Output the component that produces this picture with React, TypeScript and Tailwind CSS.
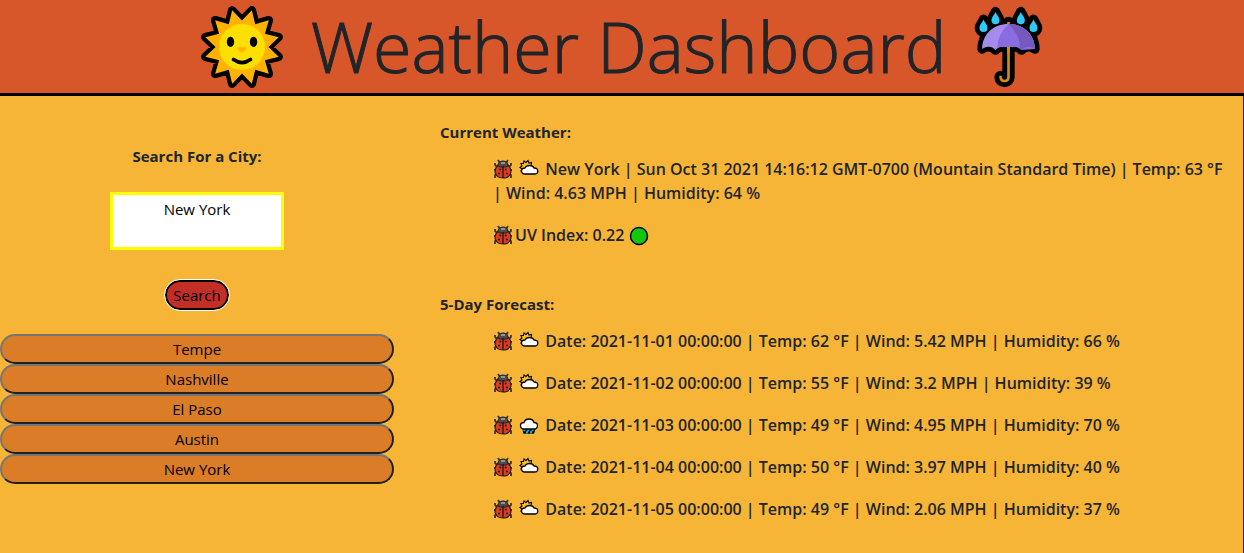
import React from "react";

function star(points: number, outer: number, inner: number) {
  return Array.from({ length: points * 2 }, (_, i) => {
    const angle = ((15 + (i * 180) / points) * Math.PI) / 180;
    const r = i % 2 === 0 ? outer : inner;
    return `${(Math.sin(angle) * r).toFixed(1)},${(-Math.cos(angle) * r).toFixed(1)}`;
  }).join(" ");
}

function SunIcon() {
  const points = star(12, 112, 78);
  return (
    <svg viewBox="-121 -121 242 242" className="size-[82px] shrink-0" aria-hidden="true">
      <polygon points={points} fill="#000" stroke="#000" strokeWidth="25" strokeLinejoin="round" />
      <polygon points={points} fill="#ffb300" />
      <circle r="68" fill="#fde000" />
      <ellipse cx="-34" cy="-15" rx="11" ry="15" />
      <ellipse cx="34" cy="-15" rx="11" ry="15" />
      <path d="M-14 1H14Q10 16 0 16T-14 1Z" fill="#ffb300" />
      <path d="M-25 37Q0 55 25 37" fill="none" stroke="#000" strokeWidth="11" strokeLinecap="round" />
    </svg>
  );
}

function UmbrellaIcon() {
  const canopy =
    "M63 146C63 102 96 71 142 71S221 102 221 146Q212 139 202 139Q189 139 181 149Q173 139 160 139H124Q111 139 103 149Q95 139 82 139Q72 139 63 146Z";
  const drops = [
    [67, 57],
    [103, 34],
    [179, 34],
    [217, 57],
  ];
  const drop = "M0 0C3 10 12 16 12 26A12 12 0 0 1-12 26C-12 16-3 10 0 0Z";
  return (
    <svg viewBox="39 17 206 246" className="h-[82px] w-[69px] shrink-0" aria-hidden="true">
      <g stroke="#000" strokeWidth="29" strokeLinejoin="round" strokeLinecap="round">
        <path d={canopy} />
        <path d="M142 68V230Q142 242 130 242Q118 242 118 230" fill="none" strokeWidth="37" />
        {drops.map(([x, y]) => (
          <path key={x} d={drop} transform={`translate(${x} ${y})`} />
        ))}
      </g>
      <path d="M142 65V230Q142 242 130 242Q118 242 118 226" fill="none" stroke="#d18b0e" strokeWidth="8" />
      <path d={canopy} fill="#a58cec" />
      <path d="M142 71Q109 101 108 144Q114 139 124 139H160Q170 139 181 149L221 146C221 102 188 71 142 71Z" fill="#8b6be0" />
      <path d="M142 71Q175 101 177 145L181 149Q189 139 202 139Q212 139 221 146C221 102 188 71 142 71Z" fill="#7659bd" />
      <path d="M142 139V160" stroke="#d18b0e" strokeWidth="8" />
      {drops.map(([x, y]) => (
        <path key={x} d={drop} transform={`translate(${x} ${y})`} fill="#2dcaf5" />
      ))}
    </svg>
  );
}

function BeetleIcon() {
  return (
    <svg viewBox="0 0 20 20" className="mr-[2px] inline-block size-5 align-[-4px]" aria-hidden="true">
      <path
        d="M7 4L5 1M13 4L15 1M4 8L2 6V4M16 8L18 6V4M4 11H1M16 11H19M4 15L2 16V19M16 15L18 16V19"
        fill="none"
        stroke="#3b322c"
        strokeWidth="1.8"
      />
      <path d="M5 6H15Q18 9 18 13Q17 19 10 19T2 13Q2 9 5 6Z" fill="#e03a20" stroke="#221e1c" strokeWidth="1.2" />
      <path d="M5 7Q5 2 10 2T15 7L13 8H7Z" fill="#4c4c4c" stroke="#222" />
      <path d="M8 4H12" stroke="#aaa" strokeWidth="1.5" />
      <path d="M10 7V19" stroke="#181818" strokeWidth="1.3" />
      <g fill="#181818">
        <circle cx="7.3" cy="10.5" r="1" />
        <circle cx="12.7" cy="10.5" r="1" />
        <circle cx="6" cy="14.5" r="1.1" />
        <circle cx="14" cy="14.5" r="1.1" />
      </g>
    </svg>
  );
}

function SkyIcon({ rain = false }: { rain?: boolean }) {
  return (
    <svg viewBox="0 0 20 20" className="mr-[2px] inline-block size-5 align-[-4px]" aria-hidden="true">
      {rain ? (
        <>
          <path d="M4 13H16L14.5 18H5Z" fill="#000" stroke="#000" strokeWidth="1.5" strokeLinejoin="round" />
          <path d="M6 13.5L4.800 16M10 13.5L8.800 16M14.500 13.5L13.300 16M8.500 16L7.500 18.500M12.500 16L11.500 18.500" stroke="#18b4ee" strokeWidth="2" />
          <path
            d="M5 14Q1.500 14 1.500 10.500Q1.500 7.500 5 7.500Q6 4 10 4T15 7.500Q18.500 7.500 18.500 10.500Q18.500 14 15 14Z"
            fill="#fff"
            stroke="#000"
            strokeWidth="1.300"
          />
        </>
      ) : (
        <>
          <path
            d="M2 12L3 10L1 8.500L3 7L2 4.500L4.500 4.500L5 2L7 3.500L9 1.500L10 4L12.500 3.500L12 7L7 12Z"
            fill="#ffc400"
            stroke="#000"
            strokeWidth="1.100"
          />
          <path
            d="M6 15Q2.500 15 2.500 12T6 9Q7 6.500 10.500 6.500T15 9Q18.800 9 18.800 12T15.500 15Z"
            fill="#fff"
            stroke="#000"
            strokeWidth="1.300"
            strokeLinejoin="round"
          />
        </>
      )}
    </svg>
  );
}

const cities = ["Tempe", "Nashville", "El Paso", "Austin", "New York"];

const forecast = [
  { date: "2021-11-01", temp: 62, wind: 5.42, humidity: 66 },
  { date: "2021-11-02", temp: 55, wind: 3.2, humidity: 39 },
  { date: "2021-11-03", temp: 49, wind: 4.95, humidity: 70, rain: true },
  { date: "2021-11-04", temp: 50, wind: 3.97, humidity: 40 },
  { date: "2021-11-05", temp: 49, wind: 2.06, humidity: 37 },
];

export default function App() {
  return (
    <div className="flex min-h-screen flex-col bg-[#f7b538] font-['Open_Sans',sans-serif] text-[15px] leading-6 text-[#212529]">
      <header className="flex items-center justify-center gap-[28px] border-b-[3px] border-black bg-[#d8572a] pt-[2px] pb-px">
        <SunIcon />
        <h1 className="pb-[2px] text-[70px] leading-[88px] font-light whitespace-nowrap [-webkit-text-stroke:1px_#212529]">Weather Dashboard</h1>
        <UmbrellaIcon />
      </header>
      <main className="flex grow border-r border-[#4a1208]">
        <aside className="flex w-[394px] shrink-0 flex-col pt-12">
          <form className="flex flex-col items-center" onSubmit={(e) => e.preventDefault()}>
            <label htmlFor="city" className="font-bold">
              Search For a City:
            </label>
            <textarea
              id="city"
              defaultValue="New York"
              rows={2}
              className="mt-6 block h-[58px] w-[174px] resize-none border-3 border-[#ffff00] bg-white px-1 py-[2px] text-center text-black outline-none"
            />
            <button
              type="submit"
              className="mt-[30px] h-[30px] rounded-full border-2 border-black bg-[#c32f27] px-[6px] leading-6 text-black outline-1 outline-white"
            >
              Search
            </button>
          </form>
          <div className="mt-6 flex flex-col">
            {cities.map((city) => (
              <button
                key={city}
                type="button"
                className="h-[30px] rounded-full border-2 border-t-[#767676] border-r-[#212121] border-b-[#212121] border-l-[#767676] bg-[#db7c26] text-black"
              >
                {city}
              </button>
            ))}
          </div>
        </aside>
        <div className="ml-[46px] flex-1 pt-6 pr-4">
          <section>
            <h2 className="font-bold">Current Weather:</h2>
            <div className="mt-[13px] ml-[53px] text-base leading-6 font-semibold">
              <p>
                <BeetleIcon /> <SkyIcon /> New York | Sun Oct 31 2021 14:16:12 GMT-0700 (Mountain Standard Time) | Temp: 63 °F{" "}
                <span className="whitespace-nowrap">| Wind: 4.63 MPH</span> | Humidity: 64 %
              </p>
              <p className="mt-[18px]">
                <BeetleIcon />
                UV Index: 0.22{" "}
                <svg viewBox="0 0 20 20" className="inline-block size-5 align-[-5px]" aria-hidden="true">
                  <circle cx="10" cy="10" r="8.5" fill="#16c60c" stroke="#000" strokeWidth="1.5" />
                </svg>
              </p>
            </div>
          </section>
          <section className="mt-[45px]">
            <h2 className="font-bold">5-Day Forecast:</h2>
            <ul className="mt-[13px] ml-[53px] flex flex-col gap-[18px] text-base leading-6 font-semibold">
              {forecast.map((day) => (
                <li key={day.date} className="h-6">
                  <BeetleIcon /> <SkyIcon rain={day.rain} /> Date: {day.date} 00:00:00 | Temp: {day.temp} °F | Wind: {day.wind} MPH | Humidity: {day.humidity} %
                </li>
              ))}
            </ul>
          </section>
        </div>
      </main>
    </div>
  );
}
